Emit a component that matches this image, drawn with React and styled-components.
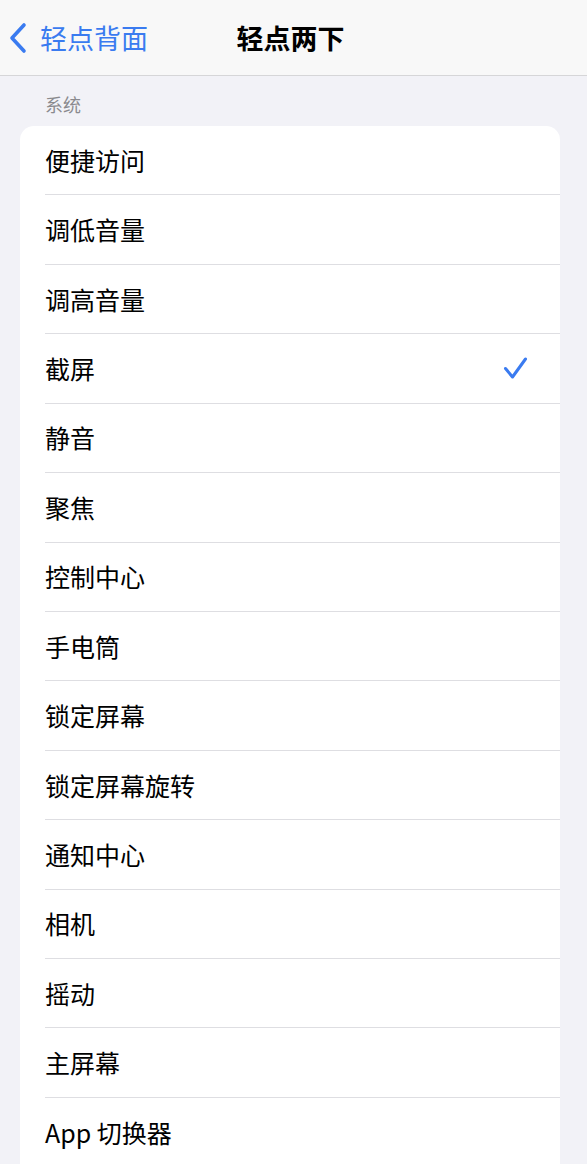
import React from "react";
import styled, { createGlobalStyle } from "styled-components";

const Global = createGlobalStyle`
  html, body { margin: 0; padding: 0; background: #f2f2f7; }
  body { font-family: "Noto Sans CJK SC", "Noto Sans", sans-serif; -webkit-font-smoothing: antialiased; }
`;

const Page = styled.div`
  width: 587px;
  height: 1164px;
  overflow: hidden;
  background: #f2f2f7;
`;

const Header = styled.header`
  position: relative;
  height: 75px;
  background: #f8f8f8;
  border-bottom: 1px solid #d6d6d8;
  display: flex;
  align-items: center;
  justify-content: center;
`;

const Back = styled.div`
  position: absolute;
  left: 9px;
  top: 0;
  height: 75px;
  display: flex;
  align-items: center;
  gap: 13px;
  color: #3a7bf0;
  font-size: 27px;
`;

const Title = styled.h1`
  margin: 0 0 0 -6px;
  font-size: 27px;
  font-weight: 700;
  color: #000;
`;

const SectionLabel = styled.div`
  padding: 17px 0 0 45px;
  height: 50px;
  box-sizing: border-box;
  font-size: 18px;
  line-height: 23px;
  color: #8a8a8e;
`;

const Card = styled.div`
  margin: 0 27px 0 20px;
  background: #fff;
  border-radius: 14px 14px 0 0;
  overflow: hidden;
`;

const Row = styled.div`
  height: 69.43px;
  margin-left: 25px;
  box-sizing: border-box;
  display: flex;
  align-items: center;
  justify-content: space-between;
  padding-right: 32px;
  border-bottom: ${(p) => (p.$last ? "none" : "1px solid #dedee2")};
  font-size: 25px;
  color: #000;
`;

const Label = styled.span`
  line-height: 1;
`;

const items = [
  "便捷访问",
  "调低音量",
  "调高音量",
  "截屏",
  "静音",
  "聚焦",
  "控制中心",
  "手电筒",
  "锁定屏幕",
  "锁定屏幕旋转",
  "通知中心",
  "相机",
  "摇动",
  "主屏幕",
  "App 切换器",
];

export default function App() {
  return (
    <Page>
      <Global />
      <Header>
        <Back>
          <svg width="18" height="32" viewBox="0 0 18 32">
            <path d="M15 3 L3 16 L15 29" fill="none" stroke="#3a7bf0" strokeWidth="3.6" strokeLinecap="round" strokeLinejoin="round" />
          </svg>
          <span>轻点背面</span>
        </Back>
        <Title>轻点两下</Title>
      </Header>
      <SectionLabel>系统</SectionLabel>
      <Card>
        {items.map((t, i) => (
          <Row key={t} $last={i === items.length - 1}>
            <Label>{t}</Label>
            {t === "截屏" && (
              <svg width="25" height="24" viewBox="0 0 25 24">
                <path d="M2.5 12.5 L9.5 21 L22.5 3" fill="none" stroke="#3a7bf0" strokeWidth="3" strokeLinecap="round" strokeLinejoin="round" />
              </svg>
            )}
          </Row>
        ))}
      </Card>
    </Page>
  );
}
